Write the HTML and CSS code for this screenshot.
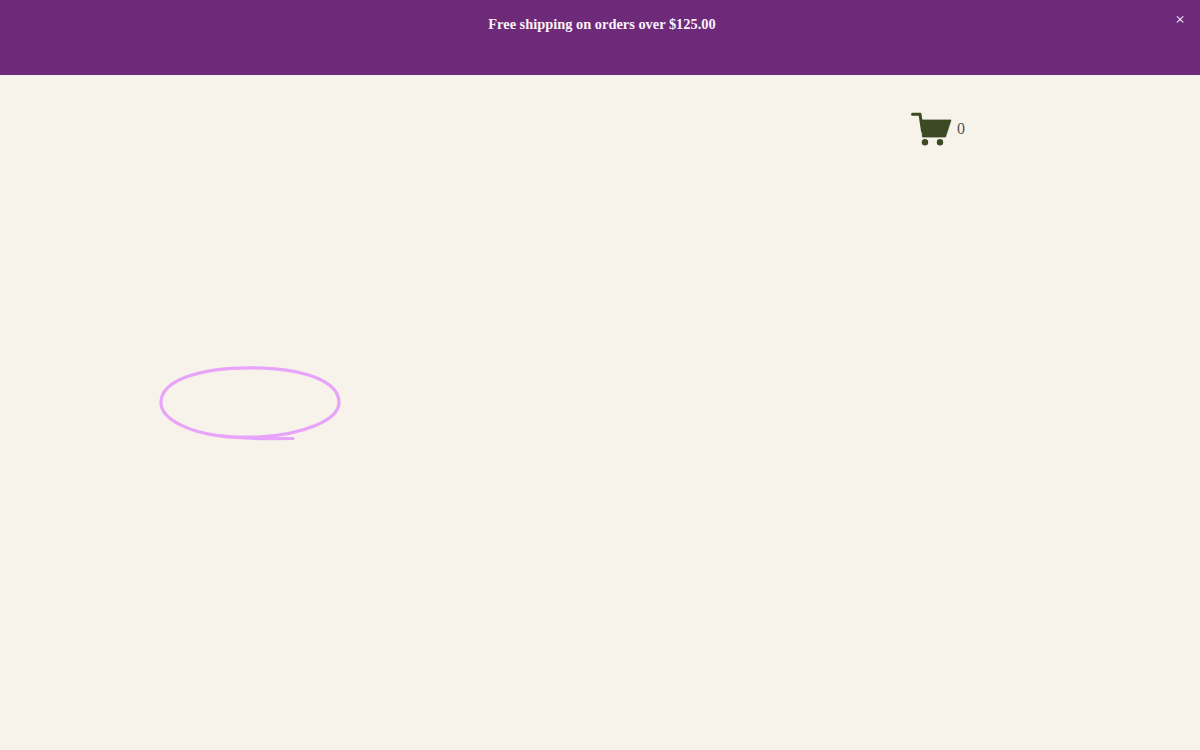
FILE: index.html
```html
<!DOCTYPE html>
<html lang="en">
<head>
<meta charset="utf-8">
<title>Shop</title>
<link rel="stylesheet" href="styles.css">
</head>
<body>
<div class="banner">
  <p class="banner-text">Free shipping on orders over $125.00</p>
  <button class="banner-close" type="button">×</button>
</div>
<header class="topbar">
  <a class="cart" href="#">
    <svg class="cart-icon" width="42" height="36" viewBox="0 0 42 36" aria-hidden="true">
      <path d="M2.500 3.200H10L12.500 20" fill="none" stroke="#3b4a22" stroke-width="3" stroke-linecap="round" stroke-linejoin="round"/>
      <path d="M11 9H41L35.500 26H12.500Z" fill="#3b4a22" stroke="#3b4a22" stroke-width="0.800" stroke-linejoin="round"/>
      <circle cx="15" cy="31.200" r="3.200" fill="#3b4a22"/>
      <circle cx="30" cy="31.200" r="3.200" fill="#3b4a22"/>
    </svg>
    <span class="cart-count">0</span>
  </a>
</header>
<main class="content">
  <svg class="scribble" width="184" height="78" viewBox="0 0 184 78" aria-hidden="true">
    <path d="M135 72.500C105 73 80 72.500 62 70C30 66 3 53 3 36.500C3 15 40 1.800 92 1.800C145 1.800 181 15 181 36.500C181 54 145 69 100 71C85 71.500 72 71 62 69.500" fill="none" stroke="#e8a3fb" stroke-width="3.200" stroke-linecap="round"/>
  </svg>
</main>
</body>
</html>
```
FILE: styles.css
```css
html, body {
  margin: 0;
  padding: 0;
  height: 100%;
}
body {
  background: #f7f3ea;
  font-family: "Liberation Serif", "Times New Roman", serif;
  overflow: hidden;
}
.banner {
  position: relative;
  height: 75px;
  box-sizing: border-box;
  padding: 16px 0 0 4px;
  background: #6c2a78;
  text-align: center;
}
.banner-text {
  margin: 0;
  color: #fbf1fb;
  font-size: 14.400px;
  font-weight: 700;
  line-height: 17px;
}
.banner-close {
  position: absolute;
  top: 12px;
  right: 14px;
  width: 12px;
  height: 16px;
  padding: 0;
  border: 0;
  background: none;
  color: #fff;
  font-family: inherit;
  font-size: 17px;
  line-height: 16px;
}
.topbar {
  display: flex;
  justify-content: flex-end;
  padding: 36px 235px 0 0;
}
.cart {
  display: flex;
  align-items: center;
  gap: 5px;
  color: #555;
  text-decoration: none;
  font-size: 16px;
}
.cart-icon {
  display: block;
}
.content {
  padding: 219px 0 0 158px;
}
.scribble {
  display: block;
}
```
